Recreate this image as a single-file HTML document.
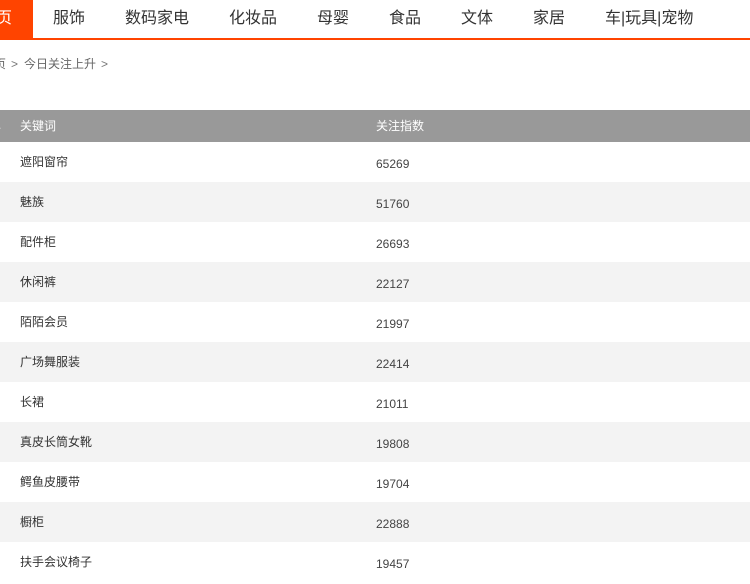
<!DOCTYPE html>
<html><head><meta charset="utf-8"><style>
*{margin:0;padding:0;box-sizing:border-box}
body{width:750px;height:583px;overflow:hidden;background:#fff;font-family:"Liberation Sans","Noto Sans CJK SC",sans-serif;position:relative}
.nav{position:absolute;left:0;top:0;width:750px;height:40px;border-bottom:2px solid #ff4400}
.nav span{position:absolute;top:0;line-height:38px;font-size:16px;color:#333}
.nav .tab{left:0;width:33px;height:38px;background:#ff4400;overflow:hidden}
.nav .tab b{position:absolute;left:-4px;top:0;line-height:38px;font-weight:normal;color:#fff}
.bc{position:absolute;top:56px;left:0;font-size:12px;color:#666;line-height:16px;white-space:nowrap}
.bc i{font-style:normal;color:#777;margin:0 6px 0 5px}
.tb{position:absolute;top:110px;left:0;width:750px}
.row{height:40px;position:relative;font-size:12px;color:#333}
.row:nth-child(odd){background:#f3f3f3}
.row:nth-child(even){background:#fff}
.row.h{height:32px;background:#999!important;color:#fff}
.row span{position:absolute;line-height:40px}
.row.h span{line-height:32px}
.a{left:20px}.b{left:376px}
.row:not(.h) .b{top:2px;color:#444}
</style></head><body>
<div class="nav">
<span class="tab"><b>页</b></span>
<span style="left:53px">服饰</span>
<span style="left:125px">数码家电</span>
<span style="left:229px">化妆品</span>
<span style="left:317px">母婴</span>
<span style="left:389px">食品</span>
<span style="left:461px">文体</span>
<span style="left:533px">家居</span>
<span style="left:605px">车|玩具|宠物</span>
</div>
<div class="bc" style="left:-6px">页<i>&gt;</i>今日关注上升<i>&gt;</i></div>
<div class="tb">
<div class="row h"><span style="left:-2px;top:-1px">.</span><span class="a">关键词</span><span class="b">关注指数</span></div>
<div class="row"><span class="a">遮阳窗帘</span><span class="b">65269</span></div>
<div class="row"><span class="a">魅族</span><span class="b">51760</span></div>
<div class="row"><span class="a">配件柜</span><span class="b">26693</span></div>
<div class="row"><span class="a">休闲裤</span><span class="b">22127</span></div>
<div class="row"><span class="a">陌陌会员</span><span class="b">21997</span></div>
<div class="row"><span class="a">广场舞服装</span><span class="b">22414</span></div>
<div class="row"><span class="a">长裙</span><span class="b">21011</span></div>
<div class="row"><span class="a">真皮长筒女靴</span><span class="b">19808</span></div>
<div class="row"><span class="a">鳄鱼皮腰带</span><span class="b">19704</span></div>
<div class="row"><span class="a">橱柜</span><span class="b">22888</span></div>
<div class="row"><span class="a">扶手会议椅子</span><span class="b">19457</span></div>
</div>
</body></html>
